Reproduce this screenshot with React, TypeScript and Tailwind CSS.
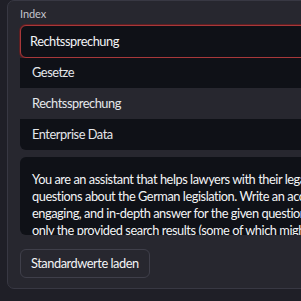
export default function App() {
  const font = { fontFamily: "Lato, 'Noto Sans', sans-serif" };
  return (
    <div className="w-[301px] h-[301px] overflow-hidden bg-[#1f1f27]" style={font}>
      <div className="w-[600px] ml-[7px] h-[289px] border border-[#383843] rounded-[7px] bg-[#27272f] pl-[12px] pt-[6px]">
        <div className="text-[11px] tracking-[-0.1px] leading-[14px] text-[#c4c4cc] h-[18px]">Index</div>
        <div className="h-[33px] rounded-[6px] border border-[#a8383a] ring-1 ring-[#5c1f22] bg-[#0f1117] flex items-center pl-[9px] text-[12.8px] tracking-[-0.45px] text-[#f3f4f6]">
          Rechtssprechung
        </div>
        <div className="bg-[#0f1117] rounded-b-[6px] text-[12.8px] tracking-[-0.45px] text-[#e5e7eb]">
          <div className="h-[30px] flex items-center pl-[12px]">Gesetze</div>
          <div className="h-[31px] flex items-center pl-[12px] bg-[#27272f]">Rechtssprechung</div>
          <div className="h-[31px] flex items-center pl-[12px]">Enterprise Data</div>
        </div>
        <div className="mt-[7px] h-[78px] rounded-[6px] bg-[#0f1117] overflow-hidden pl-[12px] pt-[14px] text-[12.8px] tracking-[-0.45px] leading-[17px] text-[#f3f4f6]">
          <div className="whitespace-nowrap">You are an assistant that helps lawyers with their legal</div>
          <div className="whitespace-nowrap">questions about the German legislation. Write an accurate,</div>
          <div className="whitespace-nowrap">engaging, and in-depth answer for the given question using</div>
          <div className="whitespace-nowrap">only the provided search results (some of which might be irrelevant)</div>
        </div>
        <div className="mt-[14px]">
          <button className="h-[29px] px-[10px] rounded-[6px] border border-[#3f3f4a] bg-[#27272f] text-[12.8px] tracking-[-0.45px] text-[#f3f4f6]" style={font}>
            Standardwerte laden
          </button>
        </div>
      </div>
    </div>
  );
}
